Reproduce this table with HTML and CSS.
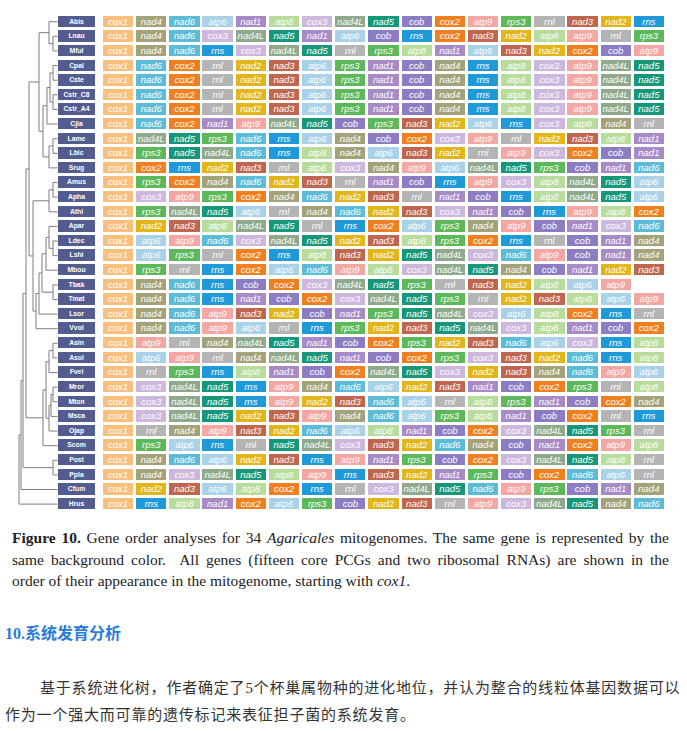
FILE: index.html
```html
<!DOCTYPE html>
<html lang="zh">
<head>
<meta charset="utf-8">
<title>Gene order</title>
<link rel="stylesheet" href="styles.css">
</head>
<body>
<div class="chart">
<svg class="tree" width="58" height="494" viewBox="0 0 58 494">
<path d="M53 20.3V34.9M53 20.3H57.5M53 34.9H57.5
M49 5.7V27.6M49 5.7H57.5M49 27.6H53
M53 49.6V64.2M53 49.6H57.5M53 64.2H57.5
M53 78.8V93.4M53 78.8H57.5M53 93.4H57.5
M50 56.9V86.1M50 56.9H53M50 86.1H53
M47 71.5V108M47 71.5H50M47 108H57.5
M53 122.7V137.3M53 122.7H57.5M53 137.3H57.5
M49 130V151.9M49 130H53M49 151.9H57.5
M43 89.75V140.95M43 89.75H47M43 140.95H49
M39 16.65V115.35M39 16.65H49M39 115.35H43
M53 166.5V181.1M53 166.5H57.5M53 181.1H57.5
M49 173.8V195.8M49 173.8H53M49 195.8H57.5
M53 225V239.6M53 225H57.5M53 239.6H57.5
M49 210.4V232.3M49 210.4H57.5M49 232.3H53
M46 221.35V254.2M46 221.35H49M46 254.2H57.5
M53 268.9V283.5M53 268.9H57.5M53 283.5H57.5
M42 237.8V276.2M42 237.8H46M42 276.2H53
M39 257V298.1M39 257H42M39 298.1H57.5
M36 277.55V312.7M36 277.55H39M36 312.7H57.5
M33 184.8V295.1M33 184.8H49M33 295.1H36
M29 66V239.95M29 66H39M29 239.95H33
M53 327.3V341.9M53 327.3H57.5M53 341.9H57.5
M49 334.6V356.6M49 334.6H53M49 356.6H57.5
M53 371.2V385.8M53 371.2H57.5M53 385.8H57.5
M51 378.5V400.4M51 378.5H53M51 400.4H57.5
M49 389.45V415M49 389.45H51M49 415H57.5
M46 345.6V402.2M46 345.6H49M46 402.2H49
M43 373.9V429.7M43 373.9H46M43 429.7H57.5
M26 153V401.8M26 153H29M26 401.8H43
M53 444.3V458.9M53 444.3H57.5M53 458.9H57.5
M23 277.4V451.6M23 277.4H26M23 451.6H53
M21 364.5V473.5M21 364.5H23M21 473.5H57.5
M19 419V488.1M19 419H21M19 488.1H57.5" fill="none" stroke="#7d7d7d" stroke-width="1"/>
</svg>
<div class="grid">
<b class="lab">Abis</b><i class="cox1">cox1</i><i class="nad4">nad4</i><i class="nad6">nad6</i><i class="atp6">atp6</i><i class="nad1">nad1</i><i class="atp8">atp8</i><i class="cox3">cox3</i><i class="nad4l">nad4L</i><i class="nad5">nad5</i><i class="cob">cob</i><i class="cox2">cox2</i><i class="atp9">atp9</i><i class="rps3">rps3</i><i class="rnl">rnl</i><i class="nad3">nad3</i><i class="nad2">nad2</i><i class="rns">rns</i>
<b class="lab">Lnau</b><i class="cox1">cox1</i><i class="nad4">nad4</i><i class="nad6">nad6</i><i class="cox3">cox3</i><i class="nad4l">nad4L</i><i class="nad5">nad5</i><i class="nad1">nad1</i><i class="atp6">atp6</i><i class="cob">cob</i><i class="rns">rns</i><i class="cox2">cox2</i><i class="nad3">nad3</i><i class="nad2">nad2</i><i class="atp8">atp8</i><i class="atp9">atp9</i><i class="rnl">rnl</i><i class="rps3">rps3</i>
<b class="lab">Mful</b><i class="cox1">cox1</i><i class="nad4">nad4</i><i class="nad6">nad6</i><i class="rns">rns</i><i class="cox3">cox3</i><i class="nad4l">nad4L</i><i class="nad5">nad5</i><i class="rnl">rnl</i><i class="rps3">rps3</i><i class="atp8">atp8</i><i class="nad1">nad1</i><i class="atp6">atp6</i><i class="nad3">nad3</i><i class="nad2">nad2</i><i class="cox2">cox2</i><i class="cob">cob</i><i class="atp9">atp9</i>
<b class="lab">Cpal</b><i class="cox1">cox1</i><i class="nad6">nad6</i><i class="cox2">cox2</i><i class="rnl">rnl</i><i class="nad2">nad2</i><i class="nad3">nad3</i><i class="atp6">atp6</i><i class="rps3">rps3</i><i class="nad1">nad1</i><i class="cob">cob</i><i class="nad4">nad4</i><i class="rns">rns</i><i class="atp8">atp8</i><i class="cox3">cox3</i><i class="atp9">atp9</i><i class="nad4l">nad4L</i><i class="nad5">nad5</i>
<b class="lab">Cste</b><i class="cox1">cox1</i><i class="nad6">nad6</i><i class="cox2">cox2</i><i class="rnl">rnl</i><i class="nad2">nad2</i><i class="nad3">nad3</i><i class="atp6">atp6</i><i class="rps3">rps3</i><i class="nad1">nad1</i><i class="cob">cob</i><i class="nad4">nad4</i><i class="rns">rns</i><i class="atp8">atp8</i><i class="cox3">cox3</i><i class="atp9">atp9</i><i class="nad4l">nad4L</i><i class="nad5">nad5</i>
<b class="lab">Cstr_C8</b><i class="cox1">cox1</i><i class="nad6">nad6</i><i class="cox2">cox2</i><i class="rnl">rnl</i><i class="nad2">nad2</i><i class="nad3">nad3</i><i class="atp6">atp6</i><i class="rps3">rps3</i><i class="nad1">nad1</i><i class="cob">cob</i><i class="nad4">nad4</i><i class="rns">rns</i><i class="atp8">atp8</i><i class="cox3">cox3</i><i class="atp9">atp9</i><i class="nad4l">nad4L</i><i class="nad5">nad5</i>
<b class="lab">Cstr_A4</b><i class="cox1">cox1</i><i class="nad6">nad6</i><i class="cox2">cox2</i><i class="rnl">rnl</i><i class="nad2">nad2</i><i class="nad3">nad3</i><i class="atp6">atp6</i><i class="rps3">rps3</i><i class="nad1">nad1</i><i class="cob">cob</i><i class="nad4">nad4</i><i class="rns">rns</i><i class="atp8">atp8</i><i class="cox3">cox3</i><i class="atp9">atp9</i><i class="nad4l">nad4L</i><i class="nad5">nad5</i>
<b class="lab">Cjia</b><i class="cox1">cox1</i><i class="nad6">nad6</i><i class="cox2">cox2</i><i class="nad1">nad1</i><i class="atp9">atp9</i><i class="nad4l">nad4L</i><i class="nad5">nad5</i><i class="cob">cob</i><i class="rps3">rps3</i><i class="nad3">nad3</i><i class="nad2">nad2</i><i class="atp6">atp6</i><i class="rns">rns</i><i class="cox3">cox3</i><i class="atp8">atp8</i><i class="nad4">nad4</i><i class="rnl">rnl</i>
<b class="lab">Lame</b><i class="cox1">cox1</i><i class="nad4l">nad4L</i><i class="nad5">nad5</i><i class="rps3">rps3</i><i class="nad6">nad6</i><i class="rns">rns</i><i class="atp6">atp6</i><i class="nad4">nad4</i><i class="cob">cob</i><i class="cox2">cox2</i><i class="cox3">cox3</i><i class="atp9">atp9</i><i class="rnl">rnl</i><i class="nad2">nad2</i><i class="nad3">nad3</i><i class="atp8">atp8</i><i class="nad1">nad1</i>
<b class="lab">Lbic</b><i class="cox1">cox1</i><i class="rps3">rps3</i><i class="nad5">nad5</i><i class="nad4l">nad4L</i><i class="nad6">nad6</i><i class="rns">rns</i><i class="atp8">atp8</i><i class="nad4">nad4</i><i class="atp6">atp6</i><i class="nad3">nad3</i><i class="nad2">nad2</i><i class="rnl">rnl</i><i class="atp9">atp9</i><i class="cox3">cox3</i><i class="cox2">cox2</i><i class="cob">cob</i><i class="nad1">nad1</i>
<b class="lab">Srug</b><i class="cox1">cox1</i><i class="cox2">cox2</i><i class="rns">rns</i><i class="nad2">nad2</i><i class="nad3">nad3</i><i class="rnl">rnl</i><i class="atp8">atp8</i><i class="cox3">cox3</i><i class="nad4">nad4</i><i class="atp9">atp9</i><i class="atp6">atp6</i><i class="nad4l">nad4L</i><i class="nad5">nad5</i><i class="rps3">rps3</i><i class="cob">cob</i><i class="nad1">nad1</i><i class="nad6">nad6</i>
<b class="lab">Amus</b><i class="cox1">cox1</i><i class="rps3">rps3</i><i class="cox2">cox2</i><i class="nad4">nad4</i><i class="nad6">nad6</i><i class="nad2">nad2</i><i class="nad3">nad3</i><i class="rnl">rnl</i><i class="nad1">nad1</i><i class="cob">cob</i><i class="rns">rns</i><i class="atp9">atp9</i><i class="cox3">cox3</i><i class="atp8">atp8</i><i class="nad4l">nad4L</i><i class="nad5">nad5</i><i class="atp6">atp6</i>
<b class="lab">Apha</b><i class="cox1">cox1</i><i class="cox3">cox3</i><i class="atp9">atp9</i><i class="rps3">rps3</i><i class="cox2">cox2</i><i class="nad4">nad4</i><i class="nad6">nad6</i><i class="nad2">nad2</i><i class="nad3">nad3</i><i class="rnl">rnl</i><i class="nad1">nad1</i><i class="cob">cob</i><i class="rns">rns</i><i class="atp8">atp8</i><i class="nad4l">nad4L</i><i class="nad5">nad5</i><i class="atp6">atp6</i>
<b class="lab">Athi</b><i class="cox1">cox1</i><i class="rps3">rps3</i><i class="nad4l">nad4L</i><i class="nad5">nad5</i><i class="atp6">atp6</i><i class="rnl">rnl</i><i class="nad4">nad4</i><i class="nad6">nad6</i><i class="nad2">nad2</i><i class="nad3">nad3</i><i class="cox3">cox3</i><i class="nad1">nad1</i><i class="cob">cob</i><i class="rns">rns</i><i class="atp9">atp9</i><i class="atp8">atp8</i><i class="cox2">cox2</i>
<b class="lab">Apar</b><i class="cox1">cox1</i><i class="nad2">nad2</i><i class="nad3">nad3</i><i class="atp8">atp8</i><i class="nad4l">nad4L</i><i class="nad5">nad5</i><i class="rnl">rnl</i><i class="rns">rns</i><i class="cox2">cox2</i><i class="atp6">atp6</i><i class="rps3">rps3</i><i class="nad4">nad4</i><i class="atp9">atp9</i><i class="cob">cob</i><i class="nad1">nad1</i><i class="cox3">cox3</i><i class="nad6">nad6</i>
<b class="lab">Ldec</b><i class="cox1">cox1</i><i class="atp6">atp6</i><i class="atp9">atp9</i><i class="nad6">nad6</i><i class="cox3">cox3</i><i class="nad4l">nad4L</i><i class="nad5">nad5</i><i class="nad2">nad2</i><i class="nad3">nad3</i><i class="atp8">atp8</i><i class="rps3">rps3</i><i class="cox2">cox2</i><i class="rns">rns</i><i class="rnl">rnl</i><i class="cob">cob</i><i class="nad1">nad1</i><i class="nad4">nad4</i>
<b class="lab">Lshi</b><i class="cox1">cox1</i><i class="atp6">atp6</i><i class="rps3">rps3</i><i class="rnl">rnl</i><i class="cox2">cox2</i><i class="rns">rns</i><i class="atp8">atp8</i><i class="nad3">nad3</i><i class="nad2">nad2</i><i class="nad5">nad5</i><i class="nad4l">nad4L</i><i class="cox3">cox3</i><i class="nad6">nad6</i><i class="atp9">atp9</i><i class="cob">cob</i><i class="nad1">nad1</i><i class="nad4">nad4</i>
<b class="lab">Mbou</b><i class="cox1">cox1</i><i class="rps3">rps3</i><i class="rnl">rnl</i><i class="rns">rns</i><i class="cox2">cox2</i><i class="atp6">atp6</i><i class="nad6">nad6</i><i class="atp9">atp9</i><i class="atp8">atp8</i><i class="cox3">cox3</i><i class="nad4l">nad4L</i><i class="nad5">nad5</i><i class="nad4">nad4</i><i class="cob">cob</i><i class="nad1">nad1</i><i class="nad2">nad2</i><i class="nad3">nad3</i>
<b class="lab">Tbak</b><i class="cox1">cox1</i><i class="nad4">nad4</i><i class="nad6">nad6</i><i class="rns">rns</i><i class="cob">cob</i><i class="cox2">cox2</i><i class="cox3">cox3</i><i class="nad4l">nad4L</i><i class="nad5">nad5</i><i class="rps3">rps3</i><i class="rnl">rnl</i><i class="nad3">nad3</i><i class="nad2">nad2</i><i class="atp8">atp8</i><i class="atp6">atp6</i><i class="atp9">atp9</i><i class="none"></i>
<b class="lab">Tmat</b><i class="cox1">cox1</i><i class="nad4">nad4</i><i class="nad6">nad6</i><i class="rns">rns</i><i class="nad1">nad1</i><i class="cob">cob</i><i class="cox2">cox2</i><i class="cox3">cox3</i><i class="nad4l">nad4L</i><i class="nad5">nad5</i><i class="rps3">rps3</i><i class="rnl">rnl</i><i class="nad2">nad2</i><i class="nad3">nad3</i><i class="atp8">atp8</i><i class="atp6">atp6</i><i class="atp9">atp9</i>
<b class="lab">Lsor</b><i class="cox1">cox1</i><i class="nad4">nad4</i><i class="nad6">nad6</i><i class="atp9">atp9</i><i class="nad3">nad3</i><i class="nad2">nad2</i><i class="cob">cob</i><i class="nad1">nad1</i><i class="rps3">rps3</i><i class="nad5">nad5</i><i class="nad4l">nad4L</i><i class="cox3">cox3</i><i class="atp6">atp6</i><i class="atp8">atp8</i><i class="cox2">cox2</i><i class="rns">rns</i><i class="rnl">rnl</i>
<b class="lab">Vvol</b><i class="cox1">cox1</i><i class="nad4">nad4</i><i class="nad6">nad6</i><i class="atp9">atp9</i><i class="atp6">atp6</i><i class="rnl">rnl</i><i class="rns">rns</i><i class="rps3">rps3</i><i class="nad2">nad2</i><i class="nad3">nad3</i><i class="nad5">nad5</i><i class="nad4l">nad4L</i><i class="cox3">cox3</i><i class="atp8">atp8</i><i class="nad1">nad1</i><i class="cob">cob</i><i class="cox2">cox2</i>
<b class="lab">Asin</b><i class="cox1">cox1</i><i class="atp9">atp9</i><i class="rnl">rnl</i><i class="nad4">nad4</i><i class="nad4l">nad4L</i><i class="nad5">nad5</i><i class="nad1">nad1</i><i class="cob">cob</i><i class="cox2">cox2</i><i class="rps3">rps3</i><i class="nad2">nad2</i><i class="nad3">nad3</i><i class="nad6">nad6</i><i class="atp6">atp6</i><i class="cox3">cox3</i><i class="rns">rns</i><i class="atp8">atp8</i>
<b class="lab">Asol</b><i class="cox1">cox1</i><i class="atp6">atp6</i><i class="atp9">atp9</i><i class="rnl">rnl</i><i class="nad4">nad4</i><i class="nad4l">nad4L</i><i class="nad5">nad5</i><i class="nad1">nad1</i><i class="cob">cob</i><i class="cox2">cox2</i><i class="rps3">rps3</i><i class="cox3">cox3</i><i class="nad3">nad3</i><i class="nad2">nad2</i><i class="nad6">nad6</i><i class="rns">rns</i><i class="atp8">atp8</i>
<b class="lab">Fvel</b><i class="cox1">cox1</i><i class="rnl">rnl</i><i class="rps3">rps3</i><i class="rns">rns</i><i class="atp8">atp8</i><i class="nad1">nad1</i><i class="cob">cob</i><i class="cox2">cox2</i><i class="nad4l">nad4L</i><i class="nad5">nad5</i><i class="cox3">cox3</i><i class="nad2">nad2</i><i class="nad3">nad3</i><i class="nad4">nad4</i><i class="nad6">nad6</i><i class="atp9">atp9</i><i class="atp6">atp6</i>
<b class="lab">Mror</b><i class="cox1">cox1</i><i class="cox3">cox3</i><i class="nad4l">nad4L</i><i class="nad5">nad5</i><i class="rns">rns</i><i class="atp9">atp9</i><i class="nad4">nad4</i><i class="nad6">nad6</i><i class="atp6">atp6</i><i class="nad2">nad2</i><i class="nad3">nad3</i><i class="nad1">nad1</i><i class="cob">cob</i><i class="cox2">cox2</i><i class="rps3">rps3</i><i class="rnl">rnl</i><i class="atp8">atp8</i>
<b class="lab">Mton</b><i class="cox1">cox1</i><i class="cox3">cox3</i><i class="nad4l">nad4L</i><i class="nad5">nad5</i><i class="rns">rns</i><i class="atp9">atp9</i><i class="nad2">nad2</i><i class="nad3">nad3</i><i class="nad6">nad6</i><i class="atp6">atp6</i><i class="rnl">rnl</i><i class="atp8">atp8</i><i class="rps3">rps3</i><i class="nad1">nad1</i><i class="cob">cob</i><i class="cox2">cox2</i><i class="nad4">nad4</i>
<b class="lab">Msca</b><i class="cox1">cox1</i><i class="cox3">cox3</i><i class="nad4l">nad4L</i><i class="nad5">nad5</i><i class="nad2">nad2</i><i class="nad3">nad3</i><i class="atp9">atp9</i><i class="nad4">nad4</i><i class="nad6">nad6</i><i class="atp6">atp6</i><i class="rps3">rps3</i><i class="atp8">atp8</i><i class="nad1">nad1</i><i class="cob">cob</i><i class="cox2">cox2</i><i class="rnl">rnl</i><i class="rns">rns</i>
<b class="lab">Ojap</b><i class="cox1">cox1</i><i class="rnl">rnl</i><i class="nad4">nad4</i><i class="atp9">atp9</i><i class="nad3">nad3</i><i class="nad2">nad2</i><i class="nad6">nad6</i><i class="atp6">atp6</i><i class="atp8">atp8</i><i class="nad1">nad1</i><i class="cob">cob</i><i class="cox2">cox2</i><i class="cox3">cox3</i><i class="nad4l">nad4L</i><i class="nad5">nad5</i><i class="rps3">rps3</i><i class="rnl">rnl</i>
<b class="lab">Scom</b><i class="cox1">cox1</i><i class="rps3">rps3</i><i class="atp6">atp6</i><i class="rns">rns</i><i class="rnl">rnl</i><i class="nad5">nad5</i><i class="nad4l">nad4L</i><i class="cox3">cox3</i><i class="nad3">nad3</i><i class="nad2">nad2</i><i class="nad6">nad6</i><i class="nad4">nad4</i><i class="cob">cob</i><i class="nad1">nad1</i><i class="cox2">cox2</i><i class="atp9">atp9</i><i class="atp8">atp8</i>
<b class="lab">Post</b><i class="cox1">cox1</i><i class="nad4">nad4</i><i class="nad6">nad6</i><i class="atp6">atp6</i><i class="nad2">nad2</i><i class="nad3">nad3</i><i class="rns">rns</i><i class="atp9">atp9</i><i class="nad1">nad1</i><i class="rps3">rps3</i><i class="cob">cob</i><i class="cox2">cox2</i><i class="cox3">cox3</i><i class="nad4l">nad4L</i><i class="nad5">nad5</i><i class="atp8">atp8</i><i class="rnl">rnl</i>
<b class="lab">Ppla</b><i class="cox1">cox1</i><i class="nad4">nad4</i><i class="cox3">cox3</i><i class="nad4l">nad4L</i><i class="nad5">nad5</i><i class="atp8">atp8</i><i class="atp9">atp9</i><i class="rns">rns</i><i class="nad3">nad3</i><i class="nad2">nad2</i><i class="nad1">nad1</i><i class="rps3">rps3</i><i class="cob">cob</i><i class="cox2">cox2</i><i class="nad6">nad6</i><i class="atp6">atp6</i><i class="rnl">rnl</i>
<b class="lab">Cfum</b><i class="cox1">cox1</i><i class="nad2">nad2</i><i class="nad3">nad3</i><i class="atp6">atp6</i><i class="atp8">atp8</i><i class="cox2">cox2</i><i class="rns">rns</i><i class="rnl">rnl</i><i class="cox3">cox3</i><i class="nad4l">nad4L</i><i class="nad5">nad5</i><i class="nad6">nad6</i><i class="atp9">atp9</i><i class="rps3">rps3</i><i class="cob">cob</i><i class="nad1">nad1</i><i class="nad4">nad4</i>
<b class="lab">Hrus</b><i class="cox1">cox1</i><i class="rns">rns</i><i class="atp8">atp8</i><i class="nad1">nad1</i><i class="cox2">cox2</i><i class="atp6">atp6</i><i class="rps3">rps3</i><i class="cob">cob</i><i class="nad2">nad2</i><i class="nad3">nad3</i><i class="rnl">rnl</i><i class="atp9">atp9</i><i class="cox3">cox3</i><i class="nad4l">nad4L</i><i class="nad5">nad5</i><i class="nad4">nad4</i><i class="nad6">nad6</i>
</div>
</div>
<p class="caption"><span class="line"><b>Figure 10.</b> Gene order analyses for 34 <em>Agaricales</em> mitogenomes. The same gene is represented by the</span> <span class="line">same background color.&nbsp; All genes (fifteen core PCGs and two ribosomal RNAs) are shown in the</span> <span class="last">order of their appearance in the mitogenome, starting with <em>cox1</em>.</span></p>
<h2 class="heading"><span class="num">10.</span>系统发育分析</h2>
<p class="para">基于系统进化树，作者确定了<span class="digit">5</span>个杯巢属物种的进化地位，并认为整合的线粒体基因数据可以作为一个强大而可靠的遗传标记来表征担子菌的系统发育。</p>
</body>
</html>
```

FILE: styles.css
```css
body {
  margin: 0;
  background: #fff;
}

.chart {
  display: flex;
  margin-top: 15.7px;
}

.tree {
  flex: none;
  width: 58px;
  height: 494px;
}

.grid {
  display: grid;
  grid-template-columns: 42.1px repeat(17, 30.3px);
  grid-auto-rows: 11.4px;
  column-gap: 2.89px;
  row-gap: 3.22px;
}

.lab {
  width: 37px;
  background: #535c8e;
  color: #fff;
  font: bold 6.8px/11.4px "Liberation Sans", Arial, sans-serif;
  text-align: center;
  white-space: nowrap;
}

.grid i {
  color: #fff;
  font: italic 9.5px/11.4px "Liberation Sans", Arial, sans-serif;
  text-align: center;
  white-space: nowrap;
  overflow: hidden;
}

.grid i.none { background: transparent; }
.cox1 { background: #f8c07c; }
.nad4 { background: #a3a27a; }
.nad6 { background: #5cbcd8; }
.atp6 { background: #a9d2e8; }
.nad1 { background: #a78ac6; }
.atp8 { background: #b7dc9c; }
.cox3 { background: #cdb7dc; }
.nad4l { background: #8ea98c; }
.nad5 { background: #16977a; }
.cob { background: #8c7cc4; }
.cox2 { background: #f07f1f; }
.atp9 { background: #f4a6a2; }
.rps3 { background: #5cb85a; }
.rnl { background: #b4b4b4; }
.nad3 { background: #c0654e; }
.nad2 { background: #e2b61a; }
.rns { background: #1f9ad8; }

.caption {
  margin: 17.5px 18px 0 12px;
  color: #222;
  font: 15.5px/21.5px "Liberation Serif", "Times New Roman", serif;
}

.caption .line {
  display: block;
  white-space: nowrap;
  text-align: justify;
  text-align-last: justify;
}

.caption .last {
  display: block;
}

.caption em { font-style: italic; }

.heading {
  margin: 29px 0 0 5px;
  color: #2a7bd6;
  font: bold 16px/22px "Noto Sans CJK SC", sans-serif;
}

.heading .num {
  font-family: "Liberation Serif", serif;
}

.para {
  margin: 29px 0 0 5px;
  color: #333;
  font: 15px/26px "Noto Sans CJK SC", sans-serif;
  letter-spacing: 0.8px;
  text-indent: 35px;
}

.para .digit {
  font-family: "Liberation Serif", serif;
  letter-spacing: 0;
  margin-right: 0.8px;
}
```
